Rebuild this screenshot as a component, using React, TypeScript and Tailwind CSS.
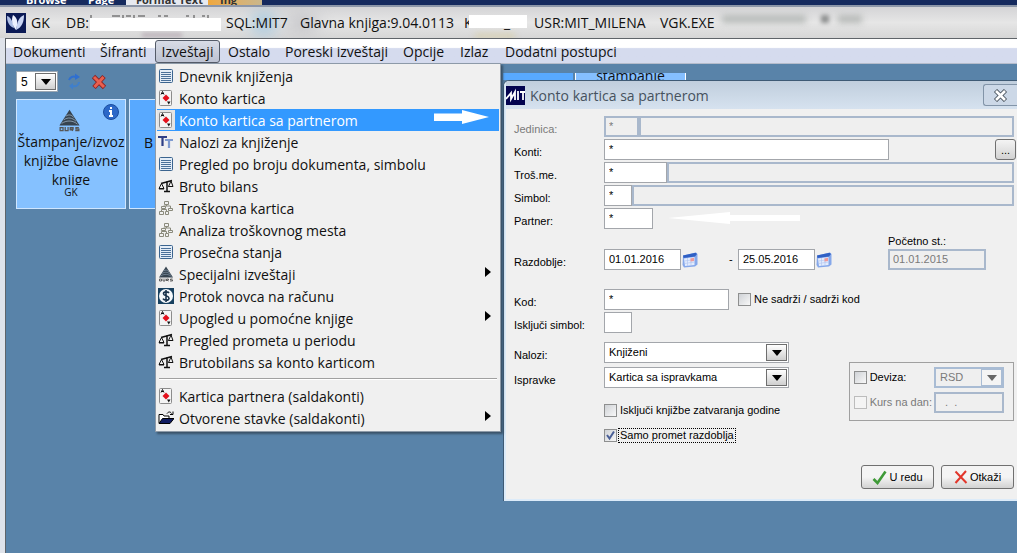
import type { ReactNode } from "react";
import { clsx } from "clsx";

const ListIcon = () => (
    <svg width="16" height="16" viewBox="0 0 16 16">
        <rect x="1.5" y="1.5" width="13" height="13" rx="1" fill="#e4edf7" stroke="#3b648f" />
        <path d="M3 4.5h10M3 6.5h10M3 8.5h10M3 10.5h10M3 12.5h10" stroke="#4a7099" />
    </svg>
);

const CardIcon = () => (
    <svg width="16" height="16" viewBox="0 0 16 16">
        <rect x="1.5" y="0.5" width="12" height="15" rx="1" fill="#f4f4f4" stroke="#8c8c8c" />
        <path d="M8 4.5l3.5 3.5L8 11.5 4.5 8z" fill="#e3101c" />
        <path d="M3 4.5l1.500-3 1.500 3M3.500 3.500h2" fill="none" stroke="#111" />
        <path d="M9 11.5h3.500l-1.700 3z" fill="#111" />
    </svg>
);

const FontsIcon = () => (
    <svg width="16" height="16" viewBox="0 0 16 16" fill="none">
        <path d="M0 3h9M4.500 3v9" stroke="#2e3f86" strokeWidth="2.200" />
        <path d="M7 6h8M11 6v8" stroke="#7f9bd0" strokeWidth="2.200" />
    </svg>
);

const ScaleIcon = () => (
    <svg width="16" height="16" viewBox="0 0 16 16" fill="none" stroke="#111">
        <path d="M3 5.500L14 2.500M9 3v10M6 13.500h6" strokeWidth="1.500" />
        <path d="M3.500 5.500L1 10.500h5zM13 3l-2.500 5.500H15z" />
        <path d="M1 11h5M10.500 8.500H15" />
    </svg>
);

const OrgIcon = () => (
    <svg width="16" height="16" viewBox="0 0 16 16" fill="none" stroke="#8a8a7c">
        <path d="M6.500 1.500h4v3h-4zM3.500 6.500h4v2h-4zM10.500 8.500h4v2h-4zM1.500 11.500h4v3h-4zM7.500 11.500h3v3h-3z" />
        <path d="M8.500 4.500v1.500M5.500 6h7v2.500M3.500 11V9.500h5V11" />
    </svg>
);

const DursIcon = ({ size = 16 }: { size?: number }) => (
    <svg width={size} height={size} viewBox="0 0 16 16">
        <path d="M8 0.500L15 11.500H1z" fill="#36434f" />
        <path d="M5.500 5c2-1.500 4-1 5.500 1M4 7.500c3-2 6-1.500 8.500 1M2.500 10c4-2.500 8-2 11 0.500" fill="none" stroke="#93a8ba" strokeWidth="0.600" />
        <path d="M1.500 13v2h2v-2zM5 12.500V15h2v-2.500M8.500 15v-2h2v1h-2l2 1M14.500 13h-2v1h2v1h-2.500" fill="none" stroke="#555" strokeWidth="0.900" />
    </svg>
);

const DollarIcon = () => (
    <svg width="16" height="16" viewBox="0 0 16 16">
        <rect width="16" height="16" fill="#17405f" />
        <circle cx="8" cy="8" r="7" fill="#f4f8fb" />
        <path d="M11 5C10 3.500 5.500 3.300 5.500 5.700S11 7.600 11 10.300 6 12.500 5 10.700M8 2v12" fill="none" stroke="#17314a" strokeWidth="1.600" />
    </svg>
);

const FolderIcon = () => (
    <svg width="16" height="16" viewBox="0 0 16 16">
        <path d="M1 13V4.500h4l1 1.500h5v3" fill="#fff" stroke="#000" />
        <path d="M1 13.500L4.500 8.500H16L12 13.500z" fill="#101c62" stroke="#000" />
        <path d="M9 3.500c1.500-2 3.500-2 4.500 0M15 1.500v3h-3" fill="none" stroke="#000" />
    </svg>
);

const CalendarIcon = () => (
    <svg width="16" height="17" viewBox="0 0 16 17">
        <path d="M1 4.500L14 1.500 15.500 3v10.500L13 15.500 2 16.500 0.500 14z" fill="#86a8ea" />
        <path d="M1 4.500L13.500 1.700 15 3 13 5.500 1.500 7z" fill="#2f5fc4" />
        <path d="M2 7.500L12.500 6V14L3 15z" fill="#e3ecfd" />
        <path d="M2.500 10l10-1.500M2.500 12.500l10-1.500M5.500 7v8M9 6.500v8" stroke="#b3c7f1" strokeWidth="0.700" />
        <path d="M8.500 7.500l3.500-.7V10l-3.500.6z" fill="#ef9a9a" />
    </svg>
);

const CrossIcon = ({ size }: { size: number }) => (
    <svg width={size} height={size} viewBox="0 0 16 16" fill="none">
        <path d="M2.500 2.500L13.500 13.500M13 2.500L3 13.500" stroke="#8e2020" strokeWidth="4.600" />
        <path d="M3 3L13 13M12.500 3L3.500 13" stroke="#e8604f" strokeWidth="3" />
    </svg>
);

interface MenuEntry {
    label: string;
    icon: ReactNode;
    sub?: boolean;
    active?: boolean;
}

const reports: MenuEntry[] = [
    { label: "Dnevnik knjiženja", icon: <ListIcon /> },
    { label: "Konto kartica", icon: <CardIcon /> },
    { label: "Konto kartica sa partnerom", icon: <CardIcon />, active: true },
    { label: "Nalozi za knjiženje", icon: <FontsIcon /> },
    { label: "Pregled po broju dokumenta, simbolu", icon: <ListIcon /> },
    { label: "Bruto bilans", icon: <ScaleIcon /> },
    { label: "Troškovna kartica", icon: <OrgIcon /> },
    { label: "Analiza troškovnog mesta", icon: <OrgIcon /> },
    { label: "Prosečna stanja", icon: <ListIcon /> },
    { label: "Specijalni izveštaji", icon: <DursIcon />, sub: true },
    { label: "Protok novca na računu", icon: <DollarIcon /> },
    { label: "Upogled u pomoćne knjige", icon: <CardIcon />, sub: true },
    { label: "Pregled prometa u periodu", icon: <ScaleIcon /> },
    { label: "Brutobilans sa konto karticom", icon: <ScaleIcon /> },
];

const ledgers: MenuEntry[] = [
    { label: "Kartica partnera (saldakonti)", icon: <CardIcon /> },
    { label: "Otvorene stavke (saldakonti)", icon: <FolderIcon />, sub: true },
];

const MenuItem = ({ label, icon, sub, active }: MenuEntry) => (
    <button
        role="menuitem"
        className={clsx(
            "flex h-[22px] w-full items-center gap-1 pr-2 text-left whitespace-nowrap",
            active ? "bg-[#3399ff] text-white" : "text-[#111]"
        )}
    >
        <span className={clsx("flex w-[18px] shrink-0 items-center justify-center", active && "h-5 bg-[#e4e4e4]")}>{icon}</span>
        <span className="grow">{label}</span>
        {active && (
            <svg width="55" height="14" viewBox="0 0 55 14" fill="#fff" className="mr-0.5 mb-1.5">
                <path d="M0 3.500h28V0l27 7-27 7v-3H0z" />
            </svg>
        )}
        {sub && (
            <svg width="6" height="10" viewBox="0 0 6 10" className="mb-1">
                <path d="M0 0l6 5-6 5z" />
            </svg>
        )}
    </button>
);

const ReportsMenu = () => (
    <div role="menu" className="absolute top-full left-0 z-20 w-[346px] border border-[#8d9aa8] bg-[#f0f0f0] px-px pt-px pb-0.5 shadow-[2px_2px_2px_#3a5268]">
        {reports.map((r) => (
            <MenuItem key={r.label} {...r} />
        ))}
        <div className="mx-0.5 my-[5px] h-0.5 border-t border-[#a0a0a0] bg-white" />
        {ledgers.map((r) => (
            <MenuItem key={r.label} {...r} />
        ))}
    </div>
);

const MenuBar = () => (
    <nav className="flex h-[26px] items-center border-t border-b border-t-[#5f6469] border-b-[#b5bccb] bg-linear-to-b from-white from-35% to-[#d5dbee] to-40% pl-[7px] text-[14px] whitespace-nowrap text-[#111]">
        <button className="w-[87px] text-left">Dokumenti</button>
        <button className="w-[55px] text-left">Šifranti</button>
        <div className="relative flex h-full items-center">
            <button className="h-[23px] w-[65px] rounded-[3px] border border-[#545b68] bg-linear-to-b from-[#d8dce6] to-[#bcc2d2]">Izveštaji</button>
            <ReportsMenu />
        </div>
        <button className="w-[65px] pl-2 text-left">Ostalo</button>
        <button className="w-[118px] text-left">Poreski izveštaji</button>
        <button className="w-[57px] text-left">Opcije</button>
        <button className="w-[45px] text-left">Izlaz</button>
        <button>Dodatni postupci</button>
    </nav>
);

const TitleBar = () => (
    <header className="relative flex h-[33px] shrink-0 items-center overflow-hidden border-t-2 border-[#8c96a8] bg-linear-to-b from-[#d4d4d6] via-[#e6e6e6] to-[#d6d6d6] pl-1.5 text-[14px] whitespace-nowrap text-[#111]">
        <div className="absolute top-1 left-[252px] h-6 w-6 rounded-full bg-[#a5c8de] blur-sm" />
        <div className="absolute top-1 left-[286px] h-6 w-8 rounded-full bg-[#c9c9cc] blur-sm" />
        <div className="absolute top-[26px] left-[142px] h-1 w-10 bg-[#b9aeb6] blur-[2px]" />
        <div className="absolute top-[27px] left-[475px] h-1 w-10 bg-[#d8cfa8] blur-[3px]" />
        <div className="absolute top-2 left-[722px] h-2 w-[84px] bg-[#b7bbb9] blur-[3px]" />
        <div className="absolute top-2 left-[821px] h-2 w-2 bg-[#8d8f8f] blur-[2px]" />
        <div className="absolute top-2 left-[838px] h-2 w-6 bg-[#b7bab8] blur-[3px]" />
        <svg width="20" height="20" viewBox="0 0 20 20" className="relative">
            <rect width="20" height="20" fill="#0b1a55" />
            <path d="M1 3c4 1 6 6 7 12C3 13 1 9 1 3z" fill="#aebfe6" />
            <path d="M7 2c5 3 5 8 3 15C6 12 5 7 7 2z" fill="#eef2ff" />
            <path d="M18 2c-5 2-7 7-8 15 6-3 8-8 8-15z" fill="#c9d5f4" />
        </svg>
        <h1 className="relative flex h-5 items-center pl-[5px]">
            <span className="w-[35px]">GK</span>
            <span className="w-6">DB:</span>
            <span className="flex h-4 w-[136px] flex-col">
                <svg width="120" height="3" viewBox="0 0 120 3" stroke="#444">
                    <path d="M1 0v3M22 1h8M33 0v3M36 1h5M44 0v3M48 1h7M68 1h3M74 1h4M96 1h3M104 0v3M112 1h3M118 0v3" />
                </svg>
                <span className="h-[13px] w-[131px] bg-white" />
            </span>
            <span className="w-[74px]">SQL:MIT7</span>
            <span className="w-[164px]">Glavna knjiga:9.04.0113</span>
            <span className="flex h-5 w-[70px] items-start">
                <span className="w-[5px] overflow-hidden leading-5">K</span>
                <span className="mt-0.5 h-[13px] w-[58px] bg-white pl-[35px] leading-4">_</span>
            </span>
            <span className="w-[126px]">USR:MIT_MILENA</span>
            <span>VGK.EXE</span>
        </h1>
    </header>
);

const Arrow = ({ className, disabled }: { className: string; disabled?: boolean }) => (
    <span
        className={clsx(
            "pointer-events-none flex items-center justify-center border",
            disabled ? "border-[#a9bcd4] bg-[#f4f4f4]" : "border-[#6e6e6e] bg-linear-to-b from-white to-[#cfcfcf]",
            className
        )}
    >
        <svg width="10" height="6" viewBox="0 0 10 6" fill={disabled ? "#666" : "#000"}>
            <path d="M0 0h10L5 6z" />
        </svg>
    </span>
);

const Tile = ({ children, className }: { children: ReactNode; className: string }) => (
    <button className={clsx("h-[110px] w-[110px] shrink-0 overflow-hidden border border-[#cfe6ff] text-[#111]", className)}>{children}</button>
);

const Desktop = () => (
    <section className="pl-2.5">
        <div className="flex h-[35px] items-center gap-[9px]">
            <div className="flex w-[478px] shrink-0 items-center">
                <div className="relative">
                    <select aria-label="Broj kolona" className="block h-[21px] w-[42px] appearance-none border border-[#9aa6b2] bg-white pl-1 font-['Liberation_Sans',sans-serif] text-[12px]">
                        <option>5</option>
                    </select>
                    <Arrow className="absolute top-0.5 right-0.5 h-[17px] w-[21px]" />
                </div>
                <button aria-label="Osveži" className="ml-2">
                    <svg width="17" height="17" viewBox="0 0 17 17" fill="none">
                        <path d="M3 7c1-3 4-4 7-3" stroke="#2f6fd0" strokeWidth="2" />
                        <path d="M9 0.500l5 3.500-5 3z" fill="#2f6fd0" />
                        <path d="M13 9c0 3-3 5-6 4" stroke="#3f7fcc" strokeWidth="2" />
                        <path d="M7 10l-4 3 4 3.500z" fill="#3f7fcc" />
                    </svg>
                </button>
                <button aria-label="Obriši" className="ml-2"><CrossIcon size={16} /></button>
            </div>
            <div className="mt-[9px] flex h-[7px] gap-0.5 self-start">
                <div className="w-[70px] bg-[#58a9ff]" />
                <div className="w-[111px] overflow-hidden border-x border-white bg-[#85bfff] text-center text-[14px] leading-1.5 text-[#111]">stampanje</div>
            </div>
        </div>
        <div className="flex gap-[3px]">
            <Tile className="bg-[#85c1ff]">
                <span className="flex h-full flex-col">
                    <span className="flex h-8 shrink-0 items-end justify-end gap-[22px] pr-1.5">
                        <DursIcon size={23} />
                        <svg width="16" height="16" viewBox="0 0 16 16" className="mb-3">
                            <circle cx="8" cy="8" r="7.500" fill="#2c68c8" stroke="#1b4d9e" />
                            <path d="M8 3v2M6 7h2v5M6 12h4" stroke="#fff" strokeWidth="2" fill="none" />
                        </svg>
                    </span>
                    <span className="h-[53px] overflow-hidden text-[14px] leading-[19px] whitespace-nowrap">Štampanje/izvoz<br />knjižbe Glavne<br />knjige</span>
                    <span className="text-[10px] leading-[14px]">GK</span>
                </span>
            </Tile>
            <Tile className="bg-[#58a9ff] text-[14px]"><span className="block pb-6 pl-3.5 text-left">B</span></Tile>
        </div>
    </section>
);

interface FieldProps {
    id: string;
    className: string;
    value?: string;
    disabled?: boolean;
    label?: string;
}

const Field = ({ id, className, value = "", disabled, label }: FieldProps) => (
    <input
        id={id}
        aria-label={label}
        defaultValue={value}
        disabled={disabled}
        className={clsx(
            "h-[21px] pb-0.5",
            disabled ? "border-2 border-[#a9b8cc] bg-[#efefef] pl-[3px] text-[#7a7a7a]" : "border border-[#a3a6ab] bg-white pl-1 text-black",
            className
        )}
    />
);

const Select = ({ id, value, className, disabled, label }: { id: string; value: string; className: string; disabled?: boolean; label?: string }) => (
    <div className={clsx("relative", className)}>
        <select
            id={id}
            aria-label={label}
            disabled={disabled}
            className={clsx(
                "block h-[21px] w-full appearance-none pl-1",
                disabled ? "border-2 border-[#a9bcd4] bg-[#efefef] text-[#7a7a7a] opacity-100" : "border border-[#a3a6ab] bg-white text-black"
            )}
        >
            <option>{value}</option>
        </select>
        <Arrow disabled={disabled} className="absolute top-0.5 right-0.5 h-[17px] w-[21px]" />
    </div>
);

const Row = ({ id, label, muted, children }: { id: string; label: string; muted?: boolean; children: ReactNode }) => (
    <div className="flex h-[21px]">
        <label htmlFor={id} className={clsx("w-[90px] shrink-0 pt-[5px] leading-4", muted && "text-[#7a7a7a]")}>{label}</label>
        {children}
    </div>
);

const Check = ({ label, checked, disabled, focused }: { label: string; checked?: boolean; disabled?: boolean; focused?: boolean }) => (
    <label className={clsx("flex h-[21px] items-center gap-px whitespace-nowrap", disabled && "text-[#7a7a7a]")}>
        <span className="relative flex">
            <input
                type="checkbox"
                defaultChecked={checked}
                disabled={disabled}
                className={clsx(
                    "h-[13px] w-[13px] appearance-none border",
                    disabled ? "border-[#bcbcbc] bg-[#f4f4f4]" : "border-[#8e8f8f] bg-linear-to-br from-[#cfd2d6] to-[#f8f8f8]"
                )}
            />
            {checked && (
                <svg width="13" height="13" viewBox="0 0 13 13" className="pointer-events-none absolute top-0 left-0">
                    <path d="M3 6l2.500 3.500L10 2.500" fill="none" stroke="#4a5f97" strokeWidth="2" />
                </svg>
            )}
        </span>
        <span className={clsx("border border-dotted px-px leading-[13px]", focused ? "border-black" : "border-transparent")}>{label}</span>
    </label>
);

const dialogButton = "flex h-6 w-[73px] items-center justify-center gap-0.5 rounded-[3px] border border-[#707070] bg-linear-to-b from-[#f4f4f4] from-50% to-[#d2d2d2]";

const CardDialog = () => (
    <div role="dialog" aria-label="Konto kartica sa partnerom" className="absolute top-4 right-0 left-[497px] z-10 overflow-hidden rounded-tl-md border-t border-l border-[#3e5a75] bg-[#f0f0f0] font-['Liberation_Sans',sans-serif] text-[11px] text-black">
        <div className="border-b-2 border-l-2 border-[#dcebf9]">
            <div className="flex h-7 items-center bg-linear-to-b from-[#c0cedd] to-[#d6e2ef] font-['Open_Sans',sans-serif] text-[14px] text-[#46525e]">
                <svg width="19" height="19" viewBox="0 0 19 19" fill="none" stroke="#fff" strokeWidth="1.800">
                    <rect width="19" height="19" fill="#03034f" stroke="none" />
                    <path d="M0 13l5-6 0 6 4-7v8M12 5v9M14 6h5M17 6v8" />
                </svg>
                <h2 className="grow pl-[5px]">Konto kartica sa partnerom</h2>
                <button aria-label="Zatvori" className="flex h-[22px] w-[34px] items-center justify-center rounded-l-[3px] border border-r-0 border-[#8294a8] bg-[#ccd8e7]">
                    <svg width="15" height="13" viewBox="0 0 15 13" fill="none">
                        <path d="M2.500 1.500l10 10M12.500 1.500l-10 10" stroke="#4c5660" strokeWidth="4.500" />
                        <path d="M3 2l9 9M12 2l-9 9" stroke="#fff" strokeWidth="2.600" />
                    </svg>
                </button>
            </div>
            <form className="pt-[7px] pr-[3px] pb-[10px] pl-[8px]" onSubmit={(e) => e.preventDefault()}>
                <div className="flex flex-col gap-0.5">
                    <Row id="jedinica" label="Jedinica:" muted>
                        <Field id="jedinica" value="*" disabled className="w-[35px]" />
                        <Field id="jedinica-naziv" label="Naziv jedinice" disabled className="min-w-0 grow" />
                    </Row>
                    <Row id="konti" label="Konti:">
                        <Field id="konti" value="*" className="w-[285px]" />
                        <button aria-label="Izaberi konto" className="-mr-0.5 ml-auto h-[21px] w-[21px] rounded-[3px] border border-[#707070] bg-linear-to-b from-[#f4f4f4] to-[#d2d2d2] leading-4">...</button>
                    </Row>
                    <Row id="trosme" label="Troš.me.">
                        <Field id="trosme" value="*" className="w-[63px]" />
                        <Field id="trosme-naziv" label="Naziv troškovnog mesta" disabled className="min-w-0 grow" />
                    </Row>
                    <Row id="simbol" label="Simbol:">
                        <Field id="simbol" value="*" className="w-7" />
                        <Field id="simbol-naziv" label="Naziv simbola" disabled className="min-w-0 grow" />
                    </Row>
                    <Row id="partner" label="Partner:">
                        <Field id="partner" value="*" className="w-[49px]" />
                        <svg width="132" height="12" viewBox="0 0 132 12" fill="#fff" className="mt-1 ml-[15px]">
                            <path d="M0 6L62 0v3h70v6H62v3z" />
                        </svg>
                    </Row>
                </div>

                <div className="mt-1 flex items-end">
                    <Row id="od" label="Razdoblje:">
                        <Field id="od" value="01.01.2016" className="w-[77px]" />
                        <button aria-label="Kalendar od" className="mx-px flex w-[46px] items-center"><CalendarIcon /></button>
                        <span className="w-[9px] leading-5">-</span>
                        <Field id="do" label="Razdoblje do" value="25.05.2016" className="w-[77px]" />
                        <button aria-label="Kalendar do" className="ml-px flex w-[72px] items-center"><CalendarIcon /></button>
                    </Row>
                    <div className="flex flex-col">
                        <label htmlFor="pocetno" className="leading-4">Početno st.:</label>
                        <Field id="pocetno" value="01.01.2015" disabled className="w-[98px]" />
                    </div>
                </div>

                <div className="mt-[19px] flex flex-col gap-0.5">
                    <Row id="kod" label="Kod:">
                        <Field id="kod" value="*" className="mr-[9px] w-[125px]" />
                        <Check label="Ne sadrži / sadrži kod" />
                    </Row>
                    <Row id="bez-simbola" label="Isključi simbol:">
                        <Field id="bez-simbola" className="w-7" />
                    </Row>
                </div>

                <div className="mt-[9px] flex items-start justify-between">
                    <div className="flex flex-col gap-1">
                        <Row id="nalozi" label="Nalozi:">
                            <Select id="nalozi" value="Knjiženi" className="w-[185px]" />
                        </Row>
                        <Row id="ispravke" label="Ispravke">
                            <Select id="ispravke" value="Kartica sa ispravkama" className="w-[185px]" />
                        </Row>
                        <div className="mt-2 flex flex-col gap-1 pl-[90px]">
                            <Check label="Isključi knjižbe zatvaranja godine" />
                            <Check label="Samo promet razdoblja" checked focused />
                        </div>
                    </div>
                    <fieldset className="mt-5 flex w-[164px] flex-col gap-1 border border-[#a0a0a0] pt-1 pr-[9px] pb-[7px] pl-1">
                        <div className="flex justify-between">
                            <Check label="Deviza:" />
                            <Select id="valuta" label="Valuta" value="RSD" disabled className="w-[70px]" />
                        </div>
                        <div className="flex justify-between">
                            <Check label="Kurs na dan:" disabled />
                            <Field id="kurs-datum" label="Datum kursa" value="  .  ." disabled className="w-[70px]" />
                        </div>
                    </fieldset>
                </div>

                <div className="mt-[19px] flex justify-end gap-[7px]">
                    <button className={dialogButton}>
                        <svg width="15" height="15" viewBox="0 0 15 15" fill="none">
                            <path d="M1.500 9l4 4L13.500 1.500" stroke="#3f9a38" strokeWidth="2.600" />
                        </svg>
                        U redu
                    </button>
                    <button className={dialogButton}>
                        <svg width="14" height="14" viewBox="0 0 14 14" fill="none">
                            <path d="M1.500 1.500l11 11.500M12 1L1.500 13" stroke="#e2372c" strokeWidth="2" />
                        </svg>
                        Otkaži
                    </button>
                </div>
            </form>
        </div>
    </div>
);

export default function App() {
    return (
        <div className="flex min-h-screen flex-col bg-[#dfe3ea] font-['Open_Sans',sans-serif]">
            <div className="flex h-[5px] shrink-0 overflow-hidden bg-[#152a5e] text-[11px] leading-none font-bold text-white">
                <span className="-mt-1.5 w-[62px] pl-[26px]">Browse</span>
                <span className="-mt-1.5 w-16 pl-[26px]">Page</span>
                <span className="w-[82px] bg-[#e6e9f0] pl-2.5 text-[#333]"><span className="-mt-1.5 block whitespace-nowrap">Format Text</span></span>
                <span className="w-[54px] bg-linear-to-r from-[#f0a83c] to-[#c9b78c] pl-3 text-[#333]"><span className="-mt-1.5 block">Ing</span></span>
            </div>
            <TitleBar />
            <div className="ml-[5px] flex grow flex-col border-l border-[#5f6469]">
                <MenuBar />
                <main className="relative grow bg-[#5983a9]">
                    <Desktop />
                    <CardDialog />
                </main>
            </div>
        </div>
    );
}
